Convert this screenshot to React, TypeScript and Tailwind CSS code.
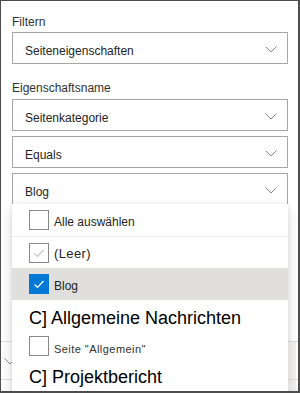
import React from "react";

const Chevron = () => (
  <svg width="12" height="7" viewBox="0 0 12 7" className="shrink-0">
    <polyline points="0.5,0.5 6,6 11.5,0.5" fill="none" stroke="#8a8886" strokeWidth="1" />
  </svg>
);

const Box = ({ value, className = "" }: { value: string; className?: string }) => (
  <div className={`h-[32px] border border-[#a6a6a6] bg-white flex items-center justify-between pl-[12px] pr-[10px] ${className}`}>
    <span className="text-[12px] leading-4 text-[#252423] pt-[6px]">{value}</span>
    <span className="pt-[2px]"><Chevron /></span>
  </div>
);

type CbState = "off" | "disabled" | "on";
const Checkbox = ({ state }: { state: CbState }) => {
  if (state === "on")
    return (
      <div className="w-[20px] h-[20px] shrink-0 bg-[#0078d4] border border-[#0078d4] flex items-center justify-center">
        <svg width="18" height="18" viewBox="0 0 18 18">
          <polyline points="4.5,9.5 7.5,12.5 13.5,6" fill="none" stroke="#ffffff" strokeWidth="1.2" />
        </svg>
      </div>
    );
  return (
    <div className="w-[20px] h-[20px] shrink-0 bg-white border border-[#8a8886] flex items-center justify-center">
      {state === "disabled" && (
        <svg width="18" height="18" viewBox="0 0 18 18">
          <polyline points="4.5,9.5 7.5,12.5 13.5,6" fill="none" stroke="#c8c6c4" strokeWidth="1.2" />
        </svg>
      )}
    </div>
  );
};

export default function App() {
  return (
    <div className="w-[300px] h-[393px] relative overflow-hidden bg-white border-l border-t border-r-2 border-b-2 border-[#4d4d4d] font-['Liberation_Sans',Arial,sans-serif]">
      <div className="flex flex-col pl-[11px] pr-[10px] pt-[13px]">
        <div className="text-[12px] leading-4 text-[#323130] mb-[2px]">Filtern</div>
        <Box value="Seiteneigenschaften" />
        <div className="text-[12px] leading-4 text-[#323130] mt-[16px] mb-[3px]">Eigenschaftsname</div>
        <Box value="Seitenkategorie" />
        <Box value="Equals" className="mt-[5px]" />
        <Box value="Blog" className="mt-[5px]" />

        {/* underlying page content behind the dropdown */}
        <div className="-ml-[11px] -mr-[10px] flex flex-col">
          <div className="h-[136px]" />
          <div className="h-[38px] border-t border-[#e1dfdd] flex items-center justify-between">
            <span className="pl-[3px] pt-[2px]"><Chevron /></span>
            <span className="w-[7px] h-full bg-[#f3f2f1] mr-[2px]" />
          </div>
          <div className="h-[40px] border-t border-[#e1dfdd] flex justify-end">
            <span className="w-[7px] h-full bg-[#f3f2f1] mr-[2px]" />
          </div>
        </div>
      </div>

      {/* dropdown panel */}
      <div className="absolute left-[11px] top-[203px] w-[276px] h-[200px] bg-white shadow-[0_6px_14px_rgba(0,0,0,0.13),0_1px_4px_rgba(0,0,0,0.11)] flex flex-col">
        <div className="h-[33px] border-b border-[#edebe9] flex items-center pl-[17px] gap-[5px]">
          <Checkbox state="off" />
          <span className="text-[12px] leading-4 text-[#252423] pt-[3px]">Alle auswählen</span>
        </div>
        <div className="h-[31px] flex items-center pl-[17px] gap-[5px]">
          <Checkbox state="disabled" />
          <span className="text-[13px] leading-4 text-[#252423] pt-[3px] tracking-[0.4px]">(Leer)</span>
        </div>
        <div className="h-[32px] bg-[#e1dfdd] flex items-center pl-[17px] gap-[5px]">
          <Checkbox state="on" />
          <span className="text-[12px] leading-4 text-[#201f1e] pt-[3px]">Blog</span>
        </div>
        <div className="h-[34px] pl-[17px] pt-[2px] text-[18px] leading-[32px] text-[#000000]">C] Allgemeine Nachrichten</div>
        <div className="h-[24px] flex items-center pl-[17px] gap-[5px]">
          <Checkbox state="off" />
          <span className="text-[11px] leading-4 tracking-[0.45px] text-[#323130] pt-[6px]">Seite "Allgemein"</span>
        </div>
        <div className="pl-[17px] pt-[3px] text-[18px] leading-[32px] text-[#000000]">C] Projektbericht</div>
      </div>
    </div>
  );
}
